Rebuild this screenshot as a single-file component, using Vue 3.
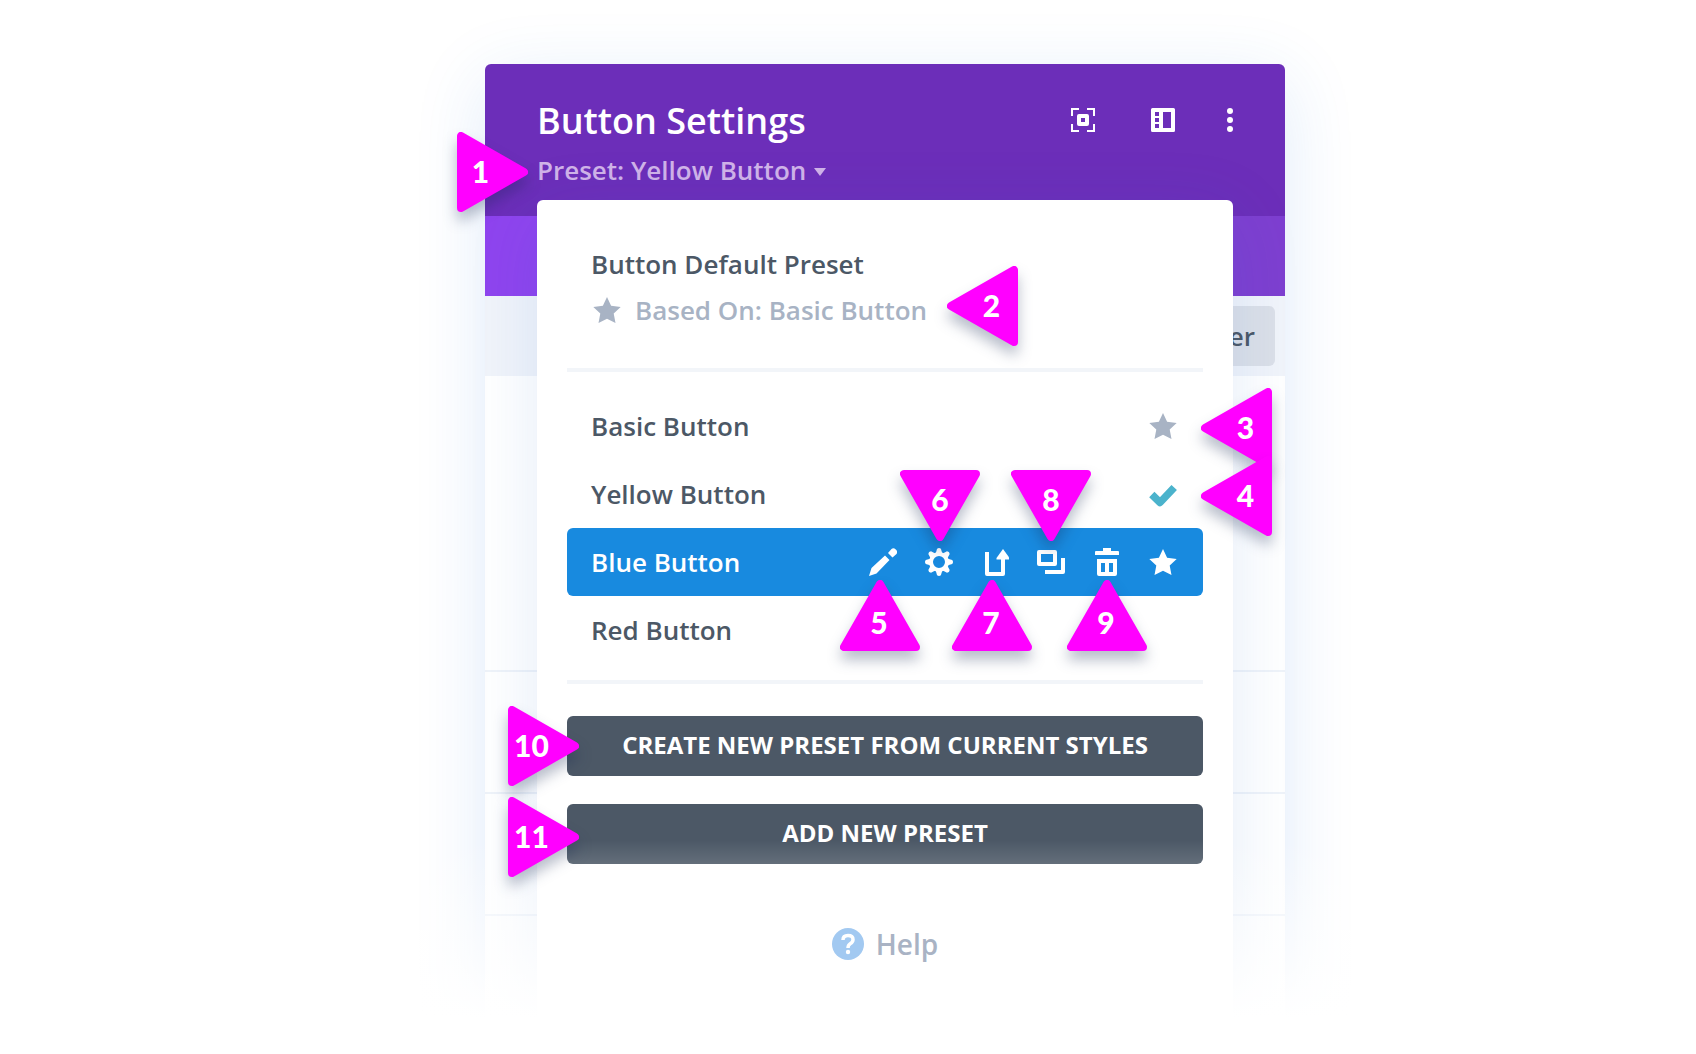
<script setup>
import { ref } from 'vue'

const presets = ref([
  { name: 'Basic Button', state: 'default' },
  { name: 'Yellow Button', state: 'selected' },
  { name: 'Blue Button', state: 'hover' },
  { name: 'Red Button', state: 'idle' },
])

const shapes = {
  right: { w: 71, h: 80, points: '4,4 4,76 67,40' },
  left: { w: 71, h: 80, points: '67,4 67,76 4,40' },
  up: { w: 80, h: 71, points: '4,67 76,67 40,4' },
  down: { w: 80, h: 71, points: '4,4 76,4 40,67' },
}

// Callout pins, placed from the top left corner of the panel.
const pins = [
  { n: 1, dir: 'right', x: -28, y: 68 },
  { n: 2, dir: 'left', x: 462, y: 202 },
  { n: 3, dir: 'left', x: 716, y: 324 },
  { n: 4, dir: 'left', x: 716, y: 392 },
  { n: 5, dir: 'up', x: 355, y: 516 },
  { n: 6, dir: 'down', x: 415, y: 406 },
  { n: 7, dir: 'up', x: 467, y: 516 },
  { n: 8, dir: 'down', x: 526, y: 406 },
  { n: 9, dir: 'up', x: 582, y: 516 },
  { n: 10, dir: 'right', x: 23, y: 642 },
  { n: 11, dir: 'right', x: 23, y: 733 },
]

const star = 'M14 1l4.1 8.7 9.6 1.2-7 6.6 1.8 9.5L14 22.7 5.5 27l1.8-9.5-7-6.6 9.6-1.2z'
</script>

<template>
  <main class="page">
    <section class="panel">
      <header class="head">
        <div class="title-row">
          <h1>Button Settings</h1>
          <div class="tools">
            <button type="button" aria-label="Expand">
              <svg width="24" height="24" viewBox="0 0 24 24">
                <path d="M1 8V1h7M16 1h7v7M23 16v7h-7M8 23H1v-7" fill="none" stroke="#fff" stroke-width="2" />
                <rect x="8" y="8" width="8" height="8" fill="none" stroke="#fff" stroke-width="4" stroke-linejoin="round" />
              </svg>
            </button>
            <button type="button" aria-label="Dock">
              <svg width="24" height="24" viewBox="0 0 24 24">
                <path
                  fill="#fff" fill-rule="evenodd"
                  d="M1.500 0h21A1.500 1.500 0 0 1 24 1.500v21a1.500 1.500 0 0 1-1.500 1.500h-21A1.500 1.500 0 0 1 0 22.500v-21A1.500 1.500 0 0 1 1.500 0zM4 4v4h4V4zM4 10v4h4v-4zM4 16v4h4v-4zM12 4v16h8V4z"
                />
              </svg>
            </button>
            <button type="button" class="more" aria-label="More">
              <svg width="6" height="24" viewBox="0 0 6 24" fill="#fff">
                <circle cx="3" cy="3" r="3" /><circle cx="3" cy="12" r="3" /><circle cx="3" cy="21" r="3" />
              </svg>
            </button>
          </div>
        </div>
        <button type="button" class="preset">
          Preset: Yellow Button
          <svg width="12" height="12" viewBox="0 0 12 12"><path d="M0 4h12L6 12z" fill="currentColor" /></svg>
        </button>
      </header>
      <div class="tabs"><span class="tab"></span></div>
      <div class="filter"><button type="button">Filter</button></div>
      <div class="block tall"></div>
      <div class="block"></div>
      <div class="block"></div>
      <div class="block last"></div>

      <div class="menu">
        <div class="default">
          <p>Button Default Preset</p>
          <p class="based">
            <svg width="28" height="28" viewBox="0 0 28 28"><path :d="star" fill="currentColor" /></svg>
            Based On: Basic Button
          </p>
        </div>
        <hr />
        <ul class="list">
          <li v-for="p in presets" :key="p.name" :class="p.state">
            <span>{{ p.name }}</span>
            <svg v-if="p.state === 'default'" width="28" height="28" viewBox="0 0 28 28"><path :d="star" fill="#a8b3c4" /></svg>
            <svg v-if="p.state === 'selected'" width="28" height="28" viewBox="0 0 28 28">
              <path
                d="M2.800 14.500l8.200 8L25.200 7.500" fill="none" stroke="#4bb3cc"
                stroke-width="7.500" stroke-linejoin="round"
              />
            </svg>
            <div v-if="p.state === 'hover'" class="actions">
              <button type="button" aria-label="Rename">
                <svg width="28" height="28" viewBox="0 0 28 28" fill="#fff">
                  <path d="M0 28l2.500-8L16 7.500l4.500 4.500L7.500 25.500zM19 5l3.500-4q2-1.500 4.300.5t.7 4.500L23.500 9.500z" />
                </svg>
              </button>
              <button type="button" aria-label="Settings">
                <svg width="28" height="28" viewBox="0 0 28 28">
                  <circle cx="14" cy="14" r="8" fill="none" stroke="#fff" stroke-width="4" />
                  <path
                    v-for="a in 8" :key="a" fill="#fff" :transform="`rotate(${a * 45} 14 14)`"
                    d="M10.500 6l1.600-5.200Q14-.8 15.900.8l1.600 5.200z"
                  />
                </svg>
              </button>
              <button type="button" aria-label="Export">
                <svg width="28" height="28" viewBox="0 0 28 28">
                  <path d="M6 4v22h16V10" fill="none" stroke="#fff" stroke-width="4" stroke-linejoin="round" />
                  <path d="M22 1l6.500 9v1.500h-13V10z" fill="#fff" />
                </svg>
              </button>
              <button type="button" aria-label="Duplicate">
                <svg width="28" height="28" viewBox="0 0 28 28" fill="none" stroke="#fff" stroke-width="4" stroke-linejoin="round">
                  <path d="M2 4h16v12H2zM26 10v14H8" />
                </svg>
              </button>
              <button type="button" aria-label="Delete">
                <svg width="28" height="28" viewBox="0 0 28 28" fill="#fff">
                  <path d="M10 0h8v3h7q1 0 1 1v3H2V4q0-1 1-1h7z" />
                  <path fill-rule="evenodd" d="M4 11h20v15q0 2-2 2H6q-2 0-2-2zM8 15v9h4v-9zM16 15v9h4v-9z" />
                </svg>
              </button>
              <button type="button" aria-label="Make default">
                <svg width="28" height="28" viewBox="0 0 28 28"><path :d="star" fill="#fff" /></svg>
              </button>
            </div>
          </li>
        </ul>
        <hr />
        <div class="buttons">
          <button type="button">CREATE NEW PRESET FROM CURRENT STYLES</button>
          <button type="button">ADD NEW PRESET</button>
        </div>
      </div>

      <div class="fade"></div>

      <a href="#help" class="help">
        <svg width="32" height="32" viewBox="0 0 32 32">
          <circle cx="16" cy="16" r="16" fill="#a2c9f1" />
          <path d="M11 12q0-4.500 5-4.500t5 4q0 2.500-2.500 4T16 20" fill="none" stroke="#fff" stroke-width="3.500" />
          <circle cx="16" cy="24" r="2.200" fill="#fff" />
        </svg>
        Help
      </a>

      <div
        v-for="p in pins" :key="p.n" class="pin" :class="p.dir"
        :style="{ left: p.x + 'px', top: p.y + 'px' }"
      >
        <svg :width="shapes[p.dir].w" :height="shapes[p.dir].h">
          <polygon :points="shapes[p.dir].points" fill="#ff00ff" stroke="#ff00ff" stroke-width="8" stroke-linejoin="round" />
        </svg>
        <span>{{ p.n }}</span>
      </div>
    </section>
  </main>
</template>

<style>
body {
  margin: 0;
  background: #fff;
}
</style>

<style scoped>
.page {
  display: flex;
  justify-content: center;
  box-sizing: border-box;
  min-height: 100vh;
  padding: 64px 0 32px 74px;
  font-family: "Open Sans", "Noto Sans", sans-serif;
  font-size: 26px;
  font-weight: 600;
  line-height: 36px;
  color: #4c5866;
  overflow: hidden;
}
button {
  border: 0;
  padding: 0;
  background: none;
  font: inherit;
  color: inherit;
  cursor: pointer;
}
svg {
  display: block;
  flex: none;
}
h1,
p,
ul {
  margin: 0;
  padding: 0;
}
.panel {
  position: relative;
  align-self: flex-start;
  width: 100%;
  max-width: 800px;
  border-radius: 6px 6px 0 0;
  box-shadow: 0 16px 72px rgba(40, 120, 220, 0.14);
}
.head {
  padding: 32px 52px 28px;
  border-radius: 6px 6px 0 0;
  background: #6c2eb9;
}
.title-row {
  display: flex;
  align-items: flex-start;
  justify-content: space-between;
  margin-bottom: 6px;
}
h1 {
  font-size: 36px;
  font-weight: 600;
  line-height: 50px;
  color: #fff;
}
.tools {
  display: flex;
  align-items: center;
  gap: 56px;
  height: 48px;
}
.tools .more {
  margin-left: -4px;
}
.preset {
  display: flex;
  align-items: center;
  gap: 8px;
  color: #d0b3e8;
}
.tabs {
  display: flex;
  height: 80px;
  background: #7e3fd0;
}
.tab {
  width: 25%;
  background: #8f44ee;
}
.filter {
  display: flex;
  justify-content: flex-end;
  padding: 10px;
  background: #f1f4fa;
}
.filter button {
  padding: 12px 20px;
  border-radius: 6px;
  background: #dce0e8;
}
.block {
  height: 120px;
  border-bottom: 2px solid #eff3f9;
  background: #fff;
}
.tall {
  height: 294px;
}
.last {
  height: 104px;
  border: 0;
}
.menu {
  position: absolute;
  top: 136px;
  left: 52px;
  right: 52px;
  bottom: 0;
  padding: 46px 30px 0;
  border-radius: 6px 6px 0 0;
  background: #fff;
  box-shadow: 0 16px 70px rgba(40, 110, 200, 0.13);
}
.default {
  padding: 0 24px 40px;
}
.based {
  display: flex;
  align-items: center;
  gap: 14px;
  margin-top: 10px;
  padding-left: 2px;
  color: #a8b3c4;
}
hr {
  height: 4px;
  margin: 0;
  border: 0;
  background: #f2f5f9;
}
.list {
  margin: 20px 0 16px;
  list-style: none;
}
.list li {
  display: flex;
  align-items: center;
  justify-content: space-between;
  height: 68px;
  padding: 0 26px 0 24px;
  border-radius: 6px;
}
.list .hover {
  background: #188adf;
  color: #fff;
}
.actions {
  display: flex;
  gap: 28px;
}
.buttons {
  display: flex;
  flex-direction: column;
  gap: 28px;
  margin-top: 32px;
}
.buttons button {
  padding: 11px 0 13px;
  border-radius: 6px;
  background: #4c5866;
  color: #fff;
  font-size: 24px;
  font-weight: 700;
}
.fade {
  position: absolute;
  left: -120px;
  right: -120px;
  bottom: -140px;
  height: 320px;
  background: linear-gradient(rgba(255, 255, 255, 0), #fff 56%);
}
.help {
  position: absolute;
  left: 0;
  right: 0;
  bottom: 58px;
  display: flex;
  align-items: center;
  justify-content: center;
  gap: 12px;
  font-size: 28px;
  color: #a9b3c4;
  text-decoration: none;
}
.pin {
  position: absolute;
  display: grid;
  place-items: center;
  font-family: Lato, sans-serif;
  font-size: 30px;
  font-weight: 900;
  font-kerning: none;
  color: #fff;
}
.pin svg,
.pin span {
  grid-area: 1 / 1;
}
.pin svg {
  filter: drop-shadow(0 9px 7px rgba(20, 35, 80, 0.3));
}
.pin span {
  position: relative;
}
.right span {
  padding: 0 24px 2px 0;
}
.left span {
  padding: 0 0 2px 18px;
}
.up span {
  padding: 12px 2px 0 0;
}
.down span {
  padding-bottom: 14px;
}
</style>
